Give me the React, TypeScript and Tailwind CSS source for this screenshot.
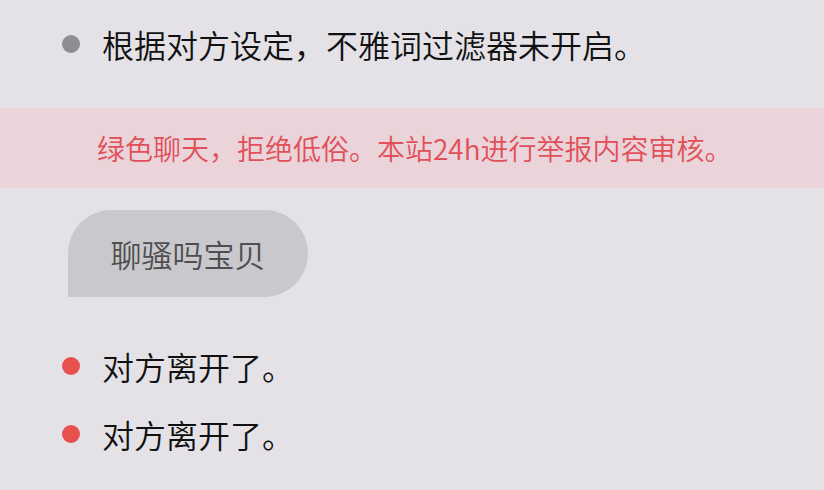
import React from "react";

const StatusLine = ({ text, dot }: { text: string; dot: string }) => {
  return (
    <div className="flex items-center h-[50px] pl-[62px] gap-[22px]">
      <span className={`w-[18px] h-[18px] rounded-full shrink-0 ${dot}`} />
      <span className="text-[32px] leading-none font-[350] text-[#111111]">{text}</span>
    </div>
  );
};

const App = () => {
  return (
    <div
      className="w-[824px] h-[490px] overflow-hidden bg-[#e4e2e7] flex flex-col"
      style={{ fontFamily: '"Noto Sans CJK SC", "Noto Sans", sans-serif' }}
    >
      <div className="flex items-center h-[88px] pl-[62px] gap-[22px]">
        <span className="w-[18px] h-[18px] rounded-full bg-[#8e8d92] shrink-0" />
        <span className="text-[32px] leading-none font-[350] text-[#111111]">
          根据对方设定，不雅词过滤器未开启。
        </span>
      </div>

      <div className="mt-[20px] h-[80px] bg-[#ead3d9] flex items-center pl-[97px]">
        <span className="text-[28px] leading-none font-[350] text-[#e14f58]">
          绿色聊天，拒绝低俗。本站24h进行举报内容审核。
        </span>
      </div>

      <div className="mt-[22px] ml-[68px] w-[240px] h-[87px] bg-[#c9c8cc] rounded-[44px] rounded-bl-none flex items-center justify-center">
        <span className="text-[31px] leading-none font-[350] text-[#4f4f4f]">聊骚吗宝贝</span>
      </div>

      <div className="mt-[44px] flex flex-col gap-[18px]">
        <StatusLine text="对方离开了。" dot="bg-[#e84f4f]" />
        <StatusLine text="对方离开了。" dot="bg-[#e84f4f]" />
      </div>
    </div>
  );
};

export default App;
